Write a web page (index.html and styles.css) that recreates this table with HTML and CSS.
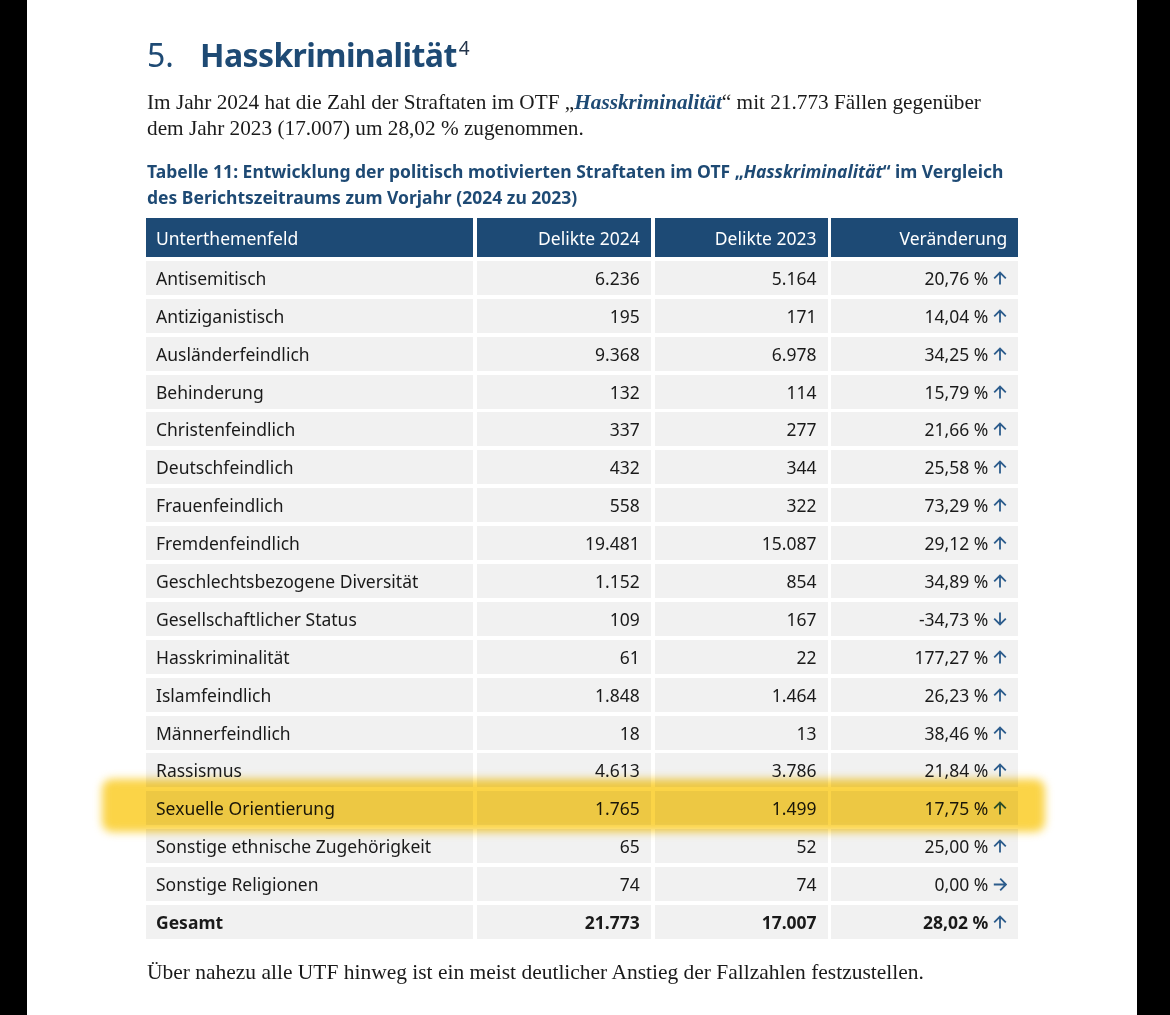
FILE: index.html
```html
<!DOCTYPE html>
<html lang="de">
<head>
<meta charset="utf-8">
<title>Hasskriminalität</title>
<link rel="stylesheet" href="styles.css">
</head>
<body>
<div class="page">
  <h1 class="title"><span class="num">5.</span><span class="name">Hasskriminalität</span><sup class="fn">4</sup></h1>
  <p class="lead">Im Jahr 2024 hat die Zahl der Straftaten im OTF „<em>Hasskriminalität</em>“ mit 21.773 Fällen gegenüber<br>dem Jahr 2023 (17.007) um 28,02 % zugenommen.</p>
  <p class="caption">Tabelle 11: Entwicklung der politisch motivierten Straftaten im OTF „<em>Hasskriminalität</em>“ im Vergleich<br>des Berichtszeitraums zum Vorjahr (2024 zu 2023)</p>
  <div class="table">
    <div class="th">Unterthemenfeld</div><div class="th r">Delikte 2024</div><div class="th r">Delikte 2023</div><div class="th r">Veränderung</div>

    <div class="td">Antisemitisch</div><div class="td r">6.236</div><div class="td r">5.164</div><div class="td r">20,76 % <svg class="ar" viewBox="0 0 14 14"><path d="M7 13.5V1.5M1.2 7.3L7 1.5l5.8 5.8"/></svg></div>
    <div class="td">Antiziganistisch</div><div class="td r">195</div><div class="td r">171</div><div class="td r">14,04 % <svg class="ar" viewBox="0 0 14 14"><path d="M7 13.5V1.5M1.2 7.3L7 1.5l5.8 5.8"/></svg></div>
    <div class="td">Ausländerfeindlich</div><div class="td r">9.368</div><div class="td r">6.978</div><div class="td r">34,25 % <svg class="ar" viewBox="0 0 14 14"><path d="M7 13.5V1.5M1.2 7.3L7 1.5l5.8 5.8"/></svg></div>
    <div class="td">Behinderung</div><div class="td r">132</div><div class="td r">114</div><div class="td r">15,79 % <svg class="ar" viewBox="0 0 14 14"><path d="M7 13.5V1.5M1.2 7.3L7 1.5l5.8 5.8"/></svg></div>
    <div class="td">Christenfeindlich</div><div class="td r">337</div><div class="td r">277</div><div class="td r">21,66 % <svg class="ar" viewBox="0 0 14 14"><path d="M7 13.5V1.5M1.2 7.3L7 1.5l5.8 5.8"/></svg></div>
    <div class="td">Deutschfeindlich</div><div class="td r">432</div><div class="td r">344</div><div class="td r">25,58 % <svg class="ar" viewBox="0 0 14 14"><path d="M7 13.5V1.5M1.2 7.3L7 1.5l5.8 5.8"/></svg></div>
    <div class="td">Frauenfeindlich</div><div class="td r">558</div><div class="td r">322</div><div class="td r">73,29 % <svg class="ar" viewBox="0 0 14 14"><path d="M7 13.5V1.5M1.2 7.3L7 1.5l5.8 5.8"/></svg></div>
    <div class="td">Fremdenfeindlich</div><div class="td r">19.481</div><div class="td r">15.087</div><div class="td r">29,12 % <svg class="ar" viewBox="0 0 14 14"><path d="M7 13.5V1.5M1.2 7.3L7 1.5l5.8 5.8"/></svg></div>
    <div class="td">Geschlechtsbezogene Diversität</div><div class="td r">1.152</div><div class="td r">854</div><div class="td r">34,89 % <svg class="ar" viewBox="0 0 14 14"><path d="M7 13.5V1.5M1.2 7.3L7 1.5l5.8 5.8"/></svg></div>
    <div class="td">Gesellschaftlicher Status</div><div class="td r">109</div><div class="td r">167</div><div class="td r">-34,73 % <svg class="ar" viewBox="0 0 14 14"><path d="M7 0.5v12M1.2 6.7L7 12.5l5.8-5.8"/></svg></div>
    <div class="td">Hasskriminalität</div><div class="td r">61</div><div class="td r">22</div><div class="td r">177,27 % <svg class="ar" viewBox="0 0 14 14"><path d="M7 13.5V1.5M1.2 7.3L7 1.5l5.8 5.8"/></svg></div>
    <div class="td">Islamfeindlich</div><div class="td r">1.848</div><div class="td r">1.464</div><div class="td r">26,23 % <svg class="ar" viewBox="0 0 14 14"><path d="M7 13.5V1.5M1.2 7.3L7 1.5l5.8 5.8"/></svg></div>
    <div class="td">Männerfeindlich</div><div class="td r">18</div><div class="td r">13</div><div class="td r">38,46 % <svg class="ar" viewBox="0 0 14 14"><path d="M7 13.5V1.5M1.2 7.3L7 1.5l5.8 5.8"/></svg></div>
    <div class="td">Rassismus</div><div class="td r">4.613</div><div class="td r">3.786</div><div class="td r">21,84 % <svg class="ar" viewBox="0 0 14 14"><path d="M7 13.5V1.5M1.2 7.3L7 1.5l5.8 5.8"/></svg></div>
    <div class="td">Sexuelle Orientierung</div><div class="td r">1.765</div><div class="td r">1.499</div><div class="td r">17,75 % <svg class="ar" viewBox="0 0 14 14"><path d="M7 13.5V1.5M1.2 7.3L7 1.5l5.8 5.8"/></svg></div>
    <div class="td">Sonstige ethnische Zugehörigkeit</div><div class="td r">65</div><div class="td r">52</div><div class="td r">25,00 % <svg class="ar" viewBox="0 0 14 14"><path d="M7 13.5V1.5M1.2 7.3L7 1.5l5.8 5.8"/></svg></div>
    <div class="td">Sonstige Religionen</div><div class="td r">74</div><div class="td r">74</div><div class="td r">0,00 % <svg class="ar" viewBox="0 0 14 14"><path d="M0.8 7.5h12M7.2 1.7L13 7.5l-5.8 5.8"/></svg></div>
    <div class="td b">Gesamt</div><div class="td r b">21.773</div><div class="td r b">17.007</div><div class="td r b">28,02 % <svg class="ar" viewBox="0 0 14 14"><path d="M7 13.5V1.5M1.2 7.3L7 1.5l5.8 5.8"/></svg></div>
  </div>
  <p class="after">Über nahezu alle UTF hinweg ist ein meist deutlicher Anstieg der Fallzahlen festzustellen.</p>
  <div class="highlight"></div>
</div>
</body>
</html>
```

FILE: styles.css
```css
html, body {
  margin: 0;
  padding: 0;
  background: #000;
}
body {
  width: 1170px;
  height: 1015px;
  overflow: hidden;
}
.page {
  position: relative;
  margin-left: 27px;
  width: 1110px;
  height: 1015px;
  background: #fff;
  box-sizing: border-box;
  padding: 33px 0 0 120px;
  color: #1a1a1a;
}
.title {
  margin: 0;
  font-family: "Noto Sans", sans-serif;
  font-size: 32px;
  letter-spacing: -0.6px;
  line-height: 44px;
  color: #1e4a74;
  font-weight: 700;
  display: flex;
  align-items: baseline;
}
.title .num {
  font-weight: 400;
  width: 53px;
  letter-spacing: 0;
}
.title .fn {
  font-size: 19px;
  font-weight: 400;
  letter-spacing: 0;
  color: #22334a;
  align-self: flex-start;
  margin-left: 2px;
  line-height: 30px;
}
.lead {
  margin: 12px 0 0;
  font-family: "Liberation Serif", serif;
  font-size: 21.25px;
  line-height: 26px;
  color: #1a1a1a;
}
.lead em {
  color: #1e4a74;
  font-weight: 700;
}
.caption {
  margin: 17px 0 0;
  font-family: "Noto Sans", sans-serif;
  font-weight: 700;
  font-size: 17.5px;
  line-height: 26px;
  color: #1e4a74;
}
.table {
  margin-top: 8px;
  display: grid;
  grid-template-columns: 327px 174px 173px 187px;
  grid-template-rows: 39px;
  grid-auto-rows: 34px;
  column-gap: 3.8px;
  row-gap: 3.9px;
  width: 872px;
  margin-left: -1px;
  font-family: "Noto Sans", sans-serif;
  font-size: 17.5px;
}
.th {
  background: #1d4a75;
  color: #fff;
  display: flex;
  align-items: center;
  padding: 0 10px;
}
.td {
  background: #f1f1f1;
  color: #1a1a1a;
  display: flex;
  align-items: center;
  padding: 0 10px;
}
.r {
  justify-content: flex-end;
  padding-right: 11px;
}
.b {
  font-weight: 700;
}
.ar {
  width: 14px;
  height: 14px;
  margin-left: 5px;
  fill: none;
  stroke: #2c5c8c;
  stroke-width: 1.8;
  flex: none;
}
.after {
  margin: 20px 0 0;
  font-family: "Liberation Serif", serif;
  font-size: 21.47px;
  line-height: 26px;
  color: #1a1a1a;
}
.highlight {
  position: absolute;
  left: 75px;
  top: 779px;
  width: 943px;
  height: 53px;
  border-radius: 10px;
  background: #fbd447;
  mix-blend-mode: multiply;
  filter: blur(4px);
}
```
